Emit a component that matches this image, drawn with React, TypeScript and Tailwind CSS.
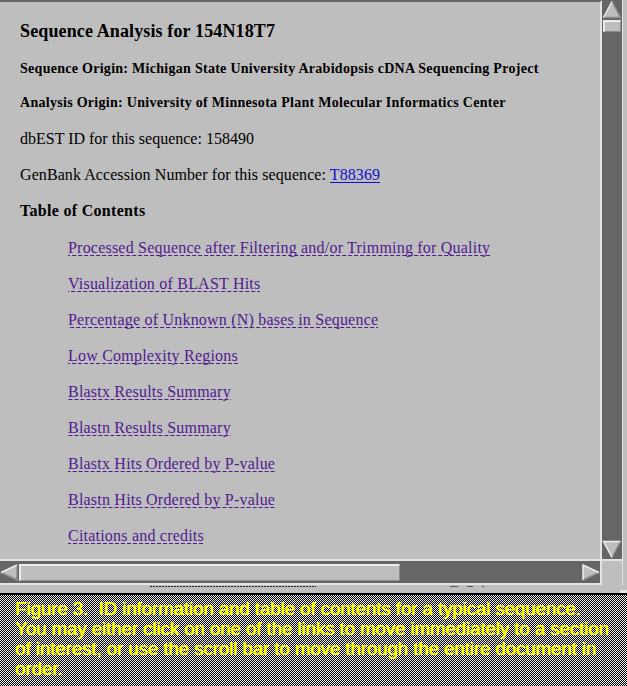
import React from "react";

const links = [
  "Processed Sequence after Filtering and/or Trimming for Quality",
  "Visualization of BLAST Hits",
  "Percentage of Unknown (N) bases in Sequence",
  "Low Complexity Regions",
  "Blastx Results Summary",
  "Blastn Results Summary",
  "Blastx Hits Ordered by P-value",
  "Blastn Hits Ordered by P-value",
  "Citations and credits",
];

const UpArrow = () => (
  <svg width="20" height="19" viewBox="0 0 20 19" className="block">
    <polygon points="10,1.5 1.5,17.5 18.5,17.5" fill="#bebebe" />
    <polyline points="10,1.5 18.5,17.5 1.5,17.5" fill="none" stroke="#8a8a8a" strokeWidth="1.5" />
    <line x1="10" y1="1.5" x2="1.5" y2="17.5" stroke="#ededed" strokeWidth="1.5" />
  </svg>
);

const DownArrow = () => (
  <svg width="20" height="19" viewBox="0 0 20 19" className="block">
    <polygon points="1.5,1.5 18.5,1.5 10,17.5" fill="#bebebe" />
    <line x1="18.5" y1="1.5" x2="10" y2="17.5" stroke="#8a8a8a" strokeWidth="1.5" />
    <polyline points="10,17.5 1.5,1.5 18.5,1.5" fill="none" stroke="#ededed" strokeWidth="1.5" />
  </svg>
);

const LeftArrow = () => (
  <svg width="18" height="17" viewBox="0 0 18 17" className="block">
    <polygon points="1,8.5 17,1 17,16" fill="#bebebe" />
    <polyline points="17,1 17,16 1,8.5" fill="none" stroke="#8a8a8a" strokeWidth="1.5" />
    <line x1="1" y1="8.5" x2="17" y2="1" stroke="#ededed" strokeWidth="1.5" />
  </svg>
);

const RightArrow = () => (
  <svg width="18" height="17" viewBox="0 0 18 17" className="block">
    <polygon points="1,1 17,8.5 1,16" fill="#bebebe" />
    <line x1="17" y1="8.5" x2="1" y2="16" stroke="#8a8a8a" strokeWidth="1.5" />
    <polyline points="1,16 1,1 17,8.5" fill="none" stroke="#ededed" strokeWidth="1.5" />
  </svg>
);

export default function App() {
  return (
    <div className="w-[627px] h-[686px] bg-[#bebebe] flex flex-col overflow-hidden">
      {/* document area + vertical scrollbar */}
      <div className="flex h-[561px] shrink-0">
        <div className="w-[602px] h-full flex flex-col border-t-2 border-t-[#666666] border-r-2 border-r-[#e4e4e4] border-b-2 border-b-[#e4e4e4] font-['Liberation_Serif',serif] text-black pl-[20px] pt-[11px]">
          <div className="h-[38px] leading-[36px] text-[18px] font-bold tracking-[0.13px] whitespace-nowrap">Sequence Analysis for 154N18T7</div>
          <div className="h-[34px] leading-[36px] text-[14px] font-bold tracking-[0.28px] whitespace-nowrap">
            Sequence Origin: Michigan State University Arabidopsis cDNA Sequencing Project
          </div>
          <div className="h-9 leading-9 text-[14px] font-bold tracking-[0.29px] whitespace-nowrap">
            Analysis Origin: University of Minnesota Plant Molecular Informatics Center
          </div>
          <div className="h-9 leading-9 text-[16px] whitespace-nowrap">dbEST ID for this sequence: 158490</div>
          <div className="h-9 leading-9 text-[16px] tracking-[0.08px] whitespace-nowrap">
            GenBank Accession Number for this sequence:{" "}
            <span className="text-[#1010cc] bg-[linear-gradient(#1010cc,#1010cc)] bg-no-repeat bg-bottom bg-[length:100%_1px]">T88369</span>
          </div>
          <div className="h-[37px] leading-9 text-[16px] font-bold tracking-[0.3px] whitespace-nowrap">Table of Contents</div>
          {links.map((l) => (
            <div key={l} className="h-9 leading-9 text-[16px] tracking-[0.21px] pl-[48px] whitespace-nowrap">
              <span className="text-[#501a90] bg-[linear-gradient(to_right,#501a90_4px,transparent_4px)] bg-repeat-x bg-bottom bg-[length:6px_1px]">
                {l}
              </span>
            </div>
          ))}
        </div>
        <div className="w-[20px] h-full bg-[#666666] flex flex-col border-b-2 border-b-[#e4e4e4]">
          <UpArrow />
          <div className="mt-[1px] ml-[1px] w-[18px] h-[12px] bg-[#bebebe] border-t-2 border-l-2 border-[#ececec] border-b border-r border-b-[#8a8a8a] border-r-[#8a8a8a]" />
          <div className="flex-1" />
          <DownArrow />
        </div>
        <div className="w-px h-full bg-[#e4e4e4]" />
        <div className="flex-1" />
      </div>

      {/* horizontal scrollbar */}
      <div className="flex h-[24px] shrink-0">
        <div className="w-[602px] h-full flex border-r-2 border-r-[#e4e4e4] border-b-2 border-b-[#e4e4e4] bg-[#666666] pt-[3px] pb-[2px]">
          <LeftArrow />
          <div className="ml-[1px] w-[381px] h-[17px] bg-[#bebebe] border-t-2 border-l-2 border-[#ececec] border-b border-r border-b-[#8a8a8a] border-r-[#8a8a8a]" />
          <div className="flex-1" />
          <RightArrow />
        </div>
        <div className="w-[20px]" />
        <div className="w-px h-full bg-[#e4e4e4]" />
        <div className="flex-1" />
      </div>

      {/* status strip */}
      <div className="h-[8px] shrink-0 relative">
        <div className="absolute left-[150px] top-[1px] w-[166px] h-px bg-[repeating-linear-gradient(to_right,#222_0_2px,transparent_2px_3px)]" />
        <div className="absolute left-[450px] top-[1px] w-[8px] h-px bg-[#555]" />
        <div className="absolute left-[467px] top-[1px] w-[6px] h-px bg-[#555]" />
        <div className="absolute left-[482px] top-[1px] w-[2px] h-px bg-[#555]" />
        <div className="absolute right-0 top-[5px] w-[7px] h-[3px] bg-[#e4e4e4]" />
      </div>
      <div className="h-[2px] shrink-0 bg-black" />

      {/* caption on dithered backdrop */}
      <div className="flex-1 bg-[repeating-linear-gradient(to_right,#ececec_0_1px,#000_1px_2px),repeating-linear-gradient(to_bottom,#ececec_0_1px,#000_1px_2px)] bg-blend-difference pt-[4px] pl-[15px] font-['Liberation_Sans',Arial,sans-serif] text-[18.5px] leading-[20px] text-[#ffff00] [text-shadow:0.6px_0_0_#ffff00] whitespace-pre">
        <div>Figure 3.  ID information and table of contents for a typical sequence.</div>
        <div>You may either click on one of the links to move immediately to a section</div>
        <div>of interest, or use the scroll bar to move through the entire document in</div>
        <div>order.</div>
      </div>
    </div>
  );
}
